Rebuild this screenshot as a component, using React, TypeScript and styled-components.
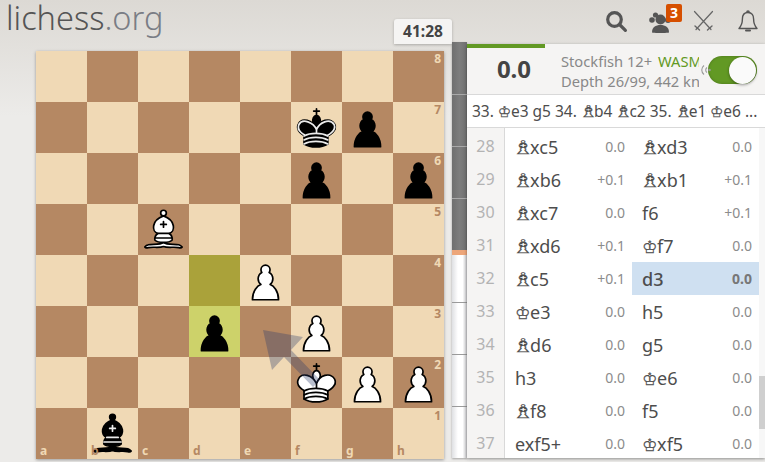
import React from "react";
import styled, { createGlobalStyle } from "styled-components";

type PieceName = "wp" | "bp" | "wk" | "bk" | "wb" | "bb";

const PAWN =
  "M22.5 9c-2.21 0-4 1.79-4 4 0 .89.29 1.71.78 2.38C17.33 16.5 16 18.59 16 21c0 2.03.94 3.84 2.41 5.03-3 1.06-7.41 5.55-7.41 13.47h23c0-7.92-4.41-12.41-7.41-13.47 1.47-1.19 2.41-3 2.41-5.03 0-2.41-1.33-4.5-3.28-5.62.49-.67.78-1.49.78-2.38 0-2.21-1.79-4-4-4z";
const KING_BODY =
  "M11.5 37c5.5 3.5 15.5 3.5 21 0v-7s9-4.5 6-10.5c-4-6.5-13.5-3.5-16 4V27v-3.5c-3.5-7.5-13-10.5-16-4-3 6 5 10 5 10V37z";
const KING_TOP =
  "M22.5 25s4.5-7.5 3-10.5c0 0-1-2.5-3-2.5s-3 2.5-3 2.5c-1.5 3 3 10.5 3 10.5";
const KING_BANDS =
  "M11.5 30c5.5-3 15.5-3 21 0m-21 3.5c5.5-3 15.5-3 21 0m-21 3.5c5.5-3 15.5-3 21 0";
const BISHOP_BASE =
  "M9 36c3.39-.97 10.11.43 13.5-2 3.39 2.43 10.11 1.03 13.5 2 0 0 1.65.54 3 2-.68.97-1.65.99-3 .5-3.39-.97-10.11.46-13.5-1-3.39 1.46-10.11.03-13.5 1-1.354.49-2.323.47-3-.5 1.354-1.94 3-2 3-2z";
const BISHOP_BODY =
  "M15 32c2.5 2.5 12.5 2.5 15 0 .5-1.5 0-2 0-2 0-2.5-2.5-4-2.5-4 5.5-1.5 6-11.5-5-15.5-11 4-10.5 14-5 15.5 0 0-2.5 1.5-2.5 4 0 0-.5.5 0 2z";
const BISHOP_BALL = "M25 8a2.5 2.5 0 1 1-5 0 2.5 2.5 0 1 1 5 0z";
const BISHOP_MARKS = "M17.5 26h10M15 30h15m-7.5-14.5v5M20 18h5";

const Piece = ({ name }: { name: PieceName }) => {
  const fill = name[0] === "w" ? "#fff" : "#000";
  const detail = name[0] === "w" ? "#000" : "#ececec";
  return (
    <PieceSvg viewBox="0 0 45 45">
      <g
        fill="none"
        fillRule="evenodd"
        stroke="#000"
        strokeWidth="1.5"
        strokeLinecap="round"
        strokeLinejoin="round"
      >
        {name[1] === "p" && <path d={PAWN} fill={fill} />}
        {name[1] === "k" && (
          <>
            <path d="M22.5 11.63V6M20 8h5" strokeLinejoin="miter" />
            <path d={KING_TOP} fill={fill} strokeLinecap="butt" strokeLinejoin="miter" />
            <path d={KING_BODY} fill={fill} />
            {name === "bk" && (
              <path
                d="M32 29.5s8.5-4 6.03-9.65C34.15 14 25 18 22.5 24.5l.01 2.1-.01-2.1C20 18 9.906 14 6.997 19.85c-2.497 5.65 4.853 9 4.853 9"
                stroke="#ececec"
              />
            )}
            <path d={KING_BANDS} stroke={detail} />
          </>
        )}
        {name[1] === "b" && (
          <>
            <g fill={fill} strokeLinecap="butt">
              <path d={BISHOP_BASE} />
              <path d={BISHOP_BODY} />
              <path d={BISHOP_BALL} />
            </g>
            <path d={BISHOP_MARKS} stroke={detail} strokeLinejoin="miter" />
          </>
        )}
      </g>
    </PieceSvg>
  );
};

const PIECES: Record<string, PieceName> = {
  f7: "bk",
  g7: "bp",
  f6: "bp",
  h6: "bp",
  c5: "wb",
  e4: "wp",
  d3: "bp",
  f3: "wp",
  f2: "wk",
  g2: "wp",
  h2: "wp",
  b1: "bb",
};

const FILES = ["a", "b", "c", "d", "e", "f", "g", "h"];
const RANKS = [8, 7, 6, 5, 4, 3, 2, 1];

const squareTone = (file: string, rank: number, dark: boolean) => {
  const key = `${file}${rank}`;
  if (key === "d4") return "#aaa23a";
  if (key === "d3") return "#cdd26a";
  return dark ? "#b58863" : "#f0d9b5";
};

const Board = () => (
  <BoardGrid>
    {RANKS.map((rank, r) =>
      FILES.map((file, f) => {
        const dark = (r + f) % 2 === 1;
        const key = `${file}${rank}`;
        return (
          <Square key={key} $bg={squareTone(file, rank, dark)}>
            {PIECES[key] && <Piece name={PIECES[key]} />}
            {file === "h" && <RankLabel $dark={dark}>{rank}</RankLabel>}
            {rank === 1 && <FileLabel $dark={dark}>{file}</FileLabel>}
          </Square>
        );
      }),
    )}
    <ArrowSvg viewBox="0 0 408 408">
      <path
        d="M227 279 L267 286 L255 299 L284 329 L277 336 L248 306 L236 319 Z"
        fill="#2a3a6a"
      />
    </ArrowSvg>
  </BoardGrid>
);

const Fig = ({ p }: { p: "K" | "B" }) => (
  <Figurine>
    <FigGlyph $wide={p === "B"}>{p === "K" ? "♔" : "♗"}</FigGlyph>
  </Figurine>
);

type Ply = { fig?: "K" | "B"; san: string; eval: string };

const ROWS: { n: number; w: Ply; b: Ply }[] = [
  { n: 28, w: { fig: "B", san: "xc5", eval: "0.0" }, b: { fig: "B", san: "xd3", eval: "0.0" } },
  { n: 29, w: { fig: "B", san: "xb6", eval: "+0.1" }, b: { fig: "B", san: "xb1", eval: "+0.1" } },
  { n: 30, w: { fig: "B", san: "xc7", eval: "0.0" }, b: { san: "f6", eval: "+0.1" } },
  { n: 31, w: { fig: "B", san: "xd6", eval: "+0.1" }, b: { fig: "K", san: "f7", eval: "0.0" } },
  { n: 32, w: { fig: "B", san: "c5", eval: "+0.1" }, b: { san: "d3", eval: "0.0" } },
  { n: 33, w: { fig: "K", san: "e3", eval: "0.0" }, b: { san: "h5", eval: "0.0" } },
  { n: 34, w: { fig: "B", san: "d6", eval: "0.0" }, b: { san: "g5", eval: "0.0" } },
  { n: 35, w: { san: "h3", eval: "0.0" }, b: { fig: "K", san: "e6", eval: "0.0" } },
  { n: 36, w: { fig: "B", san: "f8", eval: "0.0" }, b: { san: "f5", eval: "0.0" } },
  { n: 37, w: { san: "exf5+", eval: "0.0" }, b: { fig: "K", san: "xf5", eval: "0.0" } },
];

const MoveCell = ({ ply, active }: { ply: Ply; active?: boolean }) => (
  <Move $active={active}>
    <span>
      {ply.fig && <Fig p={ply.fig} />}
      {ply.san}
    </span>
    <Eval $active={active}>{ply.eval}</Eval>
  </Move>
);

const SearchIcon = () => (
  <IconSvg viewBox="0 0 24 24" fill="none" stroke="#555" strokeWidth="3.2" strokeLinecap="round">
    <circle cx="10.5" cy="10.5" r="6.8" />
    <path d="M16 16l5.4 5.4" />
  </IconSvg>
);

const FriendsIcon = () => (
  <IconSvg viewBox="0 0 24 24" fill="#555">
    <circle cx="12.5" cy="10.5" r="5" />
    <path d="M4 23.5c0-5.5 3.6-7.5 8.5-7.5s8.5 2 8.5 7.5c0 .6-17 .6-17 0z" />
    <circle cx="7.5" cy="6" r="2.6" />
    <circle cx="4" cy="11" r="2.8" />
    <circle cx="20" cy="11" r="3" />
  </IconSvg>
);

const SwordsIcon = () => (
  <IconSvg viewBox="0 0 24 24" fill="none" stroke="#666" strokeWidth="1.2" strokeLinecap="round">
    <path d="M2.5 2.5l16.5 18M20.5 2.5L4 20.5" />
    <path d="M15.5 21l4.5-4M7.5 21l-4.500-4" strokeWidth="1.4" />
  </IconSvg>
);

const BellIcon = () => (
  <IconSvg viewBox="0 0 24 24" fill="none" stroke="#555" strokeWidth="1.4" strokeLinejoin="round">
    <path d="M12 3.5c-4 0-5.6 3-5.6 6.6 0 4.5-.9 6.7-3.4 9.4h18c-2.5-2.7-3.4-4.9-3.4-9.4 0-3.6-1.6-6.6-5.6-6.6z" />
    <path d="M10.8 3.3c0-1.7 2.4-1.7 2.4 0" />
    <path d="M10 21.5h4" strokeWidth="2" strokeLinecap="round" />
  </IconSvg>
);

export default function App() {
  return (
    <Page>
      <GlobalStyle />
      <Header>
        <Logo>
          lichess<LogoTld>.org</LogoTld>
        </Logo>
        <Nav>
          <SearchIcon />
          <BadgeSlot>
            <FriendsIcon />
            <Badge>3</Badge>
          </BadgeSlot>
          <SwordsIcon />
          <BellIcon />
        </Nav>
      </Header>
      <Main>
        <BoardWrap>
          <Board />
          <Clock>41:28</Clock>
        </BoardWrap>
        <Gauge>
          <GaugeBlack />
          <GaugeMark />
          <GaugeWhite />
          {[1, 2, 3, 5, 6, 7].map((i) => (
            <GaugeTick key={i} $top={i * 52} />
          ))}
        </Gauge>
        <Panel>
          <EngineBar />
          <EngineHead>
            <Score>0.0</Score>
            <EngineInfo>
              <div>
                Stockfish 12+ <Wasm>WASM</Wasm>
              </div>
              <div>Depth 26/99, 442 kn/s</div>
            </EngineInfo>
            <Toggle>
              <Signal viewBox="0 0 12 14" fill="none" stroke="#999" strokeWidth="1.1">
                <path d="M5 2.5C2 5 2 9 5 11.5M8 4.5C6.3 5.8 6.3 8.2 8 9.5" />
                <circle cx="10.5" cy="7" r="1.3" fill="#999" stroke="none" />
              </Signal>
              <Thumb />
            </Toggle>
          </EngineHead>
          <PvLine>
            33. <Fig p="K" />e3 g5 34. <Fig p="B" />b4 <Fig p="B" />c2 35. <Fig p="B" />e1 <Fig p="K" />e6 ...
          </PvLine>
          <MoveArea>
            <MoveGrid>
              {ROWS.map((row) => (
                <React.Fragment key={row.n}>
                  <MoveIndex>{row.n}</MoveIndex>
                  <MoveCell ply={row.w} />
                  <MoveCell ply={row.b} active={row.n === 32} />
                </React.Fragment>
              ))}
            </MoveGrid>
            <ScrollTrack>
              <ScrollThumb />
            </ScrollTrack>
          </MoveArea>
        </Panel>
      </Main>
    </Page>
  );
}

const GlobalStyle = createGlobalStyle`
  html, body {
    margin: 0;
    padding: 0;
  }
  body {
    font-family: "Noto Sans", "Liberation Sans", sans-serif;
  }
`;

const Page = styled.div`
  width: 765px;
  height: 462px;
  overflow: hidden;
  background: linear-gradient(to bottom, #dcd9d4, #ecebe9 116px);
`;

const Header = styled.header`
  height: 42px;
  display: flex;
  justify-content: space-between;
  align-items: center;
  padding: 0 5px 0 6px;
`;

const Logo = styled.div`
  font-size: 32.5px;
  font-weight: 300;
  line-height: 34px;
  padding-bottom: 6px;
  color: #555;
`;

const LogoTld = styled.span`
  color: #7a7d85;
`;

const Nav = styled.nav`
  display: flex;
  align-items: center;
  gap: 20px;
`;

const IconSvg = styled.svg`
  width: 24px;
  height: 24px;
  display: block;
`;

const BadgeSlot = styled.div`
  position: relative;
`;

const Badge = styled.span`
  position: absolute;
  left: 18px;
  top: -5px;
  width: 16px;
  height: 18px;
  border-radius: 2px;
  background: #d64f00;
  color: #fff;
  font-size: 14px;
  font-weight: 700;
  line-height: 18px;
  text-align: center;
`;

const Main = styled.main`
  display: flex;
  align-items: flex-start;
  padding-left: 36px;
`;

const BoardWrap = styled.div`
  position: relative;
  margin-top: 9px;
  box-shadow: 0 1px 3px rgba(0, 0, 0, 0.35);
`;

const BoardGrid = styled.div`
  position: relative;
  width: 408px;
  height: 408px;
  display: grid;
  grid-template-columns: repeat(8, 51px);
  grid-template-rows: repeat(8, 51px);
`;

const Square = styled.div<{ $bg: string }>`
  position: relative;
  background: ${({ $bg }) => $bg};
`;

const PieceSvg = styled.svg`
  width: 51px;
  height: 51px;
  display: block;
`;

const RankLabel = styled.span<{ $dark: boolean }>`
  position: absolute;
  top: 1px;
  right: 3px;
  font-size: 12px;
  font-weight: 700;
  line-height: 14px;
  color: ${({ $dark }) => ($dark ? "#f0d9b5" : "#b58863")};
`;

const FileLabel = styled.span<{ $dark: boolean }>`
  position: absolute;
  bottom: 1px;
  left: 4px;
  font-size: 12px;
  font-weight: 700;
  line-height: 14px;
  color: ${({ $dark }) => ($dark ? "#f0d9b5" : "#b58863")};
`;

const ArrowSvg = styled.svg`
  position: absolute;
  inset: 0;
  width: 408px;
  height: 408px;
  opacity: 0.32;
  pointer-events: none;
`;

const Clock = styled.div`
  position: absolute;
  top: -32px;
  left: 358px;
  width: 58px;
  height: 25px;
  border-radius: 3px 3px 0 0;
  background: #f5f4f3;
  box-shadow: 0 1px 3px rgba(0, 0, 0, 0.25);
  color: #444;
  font-size: 15.5px;
  font-weight: 700;
  line-height: 25px;
  text-align: center;
`;

const Gauge = styled.div`
  position: relative;
  width: 15px;
  height: 416px;
  margin-left: 8px;
  display: flex;
  flex-direction: column;
  box-shadow: 0 1px 2px rgba(0, 0, 0, 0.3);
`;

const GaugeBlack = styled.div`
  height: 208px;
  background: linear-gradient(to right, #6f6f6f, #7d7d7d 50%, #6f6f6f);
`;

const GaugeMark = styled.div`
  height: 5px;
  background: #eda67a;
`;

const GaugeWhite = styled.div`
  flex: 1;
  background: linear-gradient(to right, #dfe0e3, #fff 40%, #fff 70%, #c9c9cc);
`;

const GaugeTick = styled.div<{ $top: number }>`
  position: absolute;
  left: 0;
  right: 0;
  top: ${({ $top }) => $top}px;
  height: 1px;
  background: ${({ $top }) => ($top < 208 ? "#a9a9a9" : "#9a9a9a")};
`;

const Panel = styled.aside`
  position: relative;
  width: 298px;
  height: 414px;
  margin-top: 2px;
  display: flex;
  flex-direction: column;
  overflow: hidden;
  background: #fff;
  box-shadow: 0 1px 3px rgba(0, 0, 0, 0.4);
`;

const EngineBar = styled.div`
  position: absolute;
  top: 0;
  left: 0;
  width: 78px;
  height: 4px;
  background: #629924;
`;

const EngineHead = styled.div`
  height: 50px;
  flex: none;
  display: flex;
  align-items: center;
  padding-right: 8px;
  background: #f5f4f3;
  border-bottom: 1px solid #d9d9d9;
`;

const Score = styled.div`
  width: 94px;
  flex: none;
  margin-bottom: 2px;
  text-align: center;
  font-size: 24px;
  font-weight: 700;
  color: #444;
`;

const EngineInfo = styled.div`
  width: 138px;
  flex: none;
  margin: 4px 1px 0 0;
  overflow: hidden;
  white-space: nowrap;
  font-size: 14.7px;
  line-height: 20px;
  color: #888;
`;

const Wasm = styled.span`
  color: #629924;
  margin-left: 2px;
`;

const Toggle = styled.div`
  position: relative;
  width: 49px;
  height: 28px;
  margin: 2px 0 0 8px;
  border-radius: 14px;
  background: #629924;
  box-shadow: inset 0 0 3px rgba(0, 0, 0, 0.25);
  display: flex;
  align-items: center;
  justify-content: flex-end;
  padding-right: 1px;
  box-sizing: border-box;
`;

const Signal = styled.svg`
  position: absolute;
  left: -9px;
  top: 7px;
  width: 12px;
  height: 14px;
`;

const Thumb = styled.div`
  width: 27px;
  height: 27px;
  border-radius: 50%;
  background: #fafafa;
  box-shadow: 0 1px 3px rgba(0, 0, 0, 0.4);
`;

const PvLine = styled.div`
  height: 33px;
  flex: none;
  box-sizing: border-box;
  padding-left: 5px;
  border-bottom: 1px solid #d9d9d9;
  font-size: 15.5px;
  line-height: 32px;
  color: #4d4d4d;
  white-space: nowrap;
  overflow: hidden;
`;

const Figurine = styled.span`
  display: inline-block;
  width: 0.84em;
  text-align: center;
  font-family: "DejaVu Sans", sans-serif;
  -webkit-text-stroke: 0.25px currentColor;
`;

const FigGlyph = styled.span<{ $wide: boolean }>`
  display: inline-block;
  font-size: ${({ $wide }) => ($wide ? "1.05em" : "0.95em")};
  transform: ${({ $wide }) => ($wide ? "scaleX(1.4)" : "none")};
`;

const MoveArea = styled.div`
  flex: 1;
  min-height: 0;
  display: flex;
  overflow: hidden;
`;

const MoveGrid = styled.div`
  width: 292px;
  padding-top: 2px;
  display: grid;
  grid-template-columns: 38px 127px 127px;
  grid-auto-rows: 33px;
  background: linear-gradient(to right, #f5f4f3 37px, #d9d9d9 37px, #d9d9d9 38px, #fff 38px);
`;

const MoveIndex = styled.div`
  width: 37px;
  text-align: center;
  font-size: 16px;
  line-height: 33px;
  color: #b3b3b3;
`;

const Move = styled.div<{ $active?: boolean }>`
  display: flex;
  justify-content: space-between;
  align-items: center;
  padding: 0 7px 0 10px;
  font-size: 18px;
  font-weight: ${({ $active }) => ($active ? 500 : 400)};
  color: #4d4d4d;
  background: ${({ $active }) => ($active ? "#cfe0f1" : "transparent")};
`;

const Eval = styled.span<{ $active?: boolean }>`
  font-size: 14px;
  font-weight: ${({ $active }) => ($active ? 700 : 400)};
  color: ${({ $active }) => ($active ? "#777" : "#8c8c8c")};
`;

const ScrollTrack = styled.div`
  width: 6px;
  background: #f7f7f7;
  padding-top: 248px;
`;

const ScrollThumb = styled.div`
  height: 53px;
  background: #cfcfcf;
`;
